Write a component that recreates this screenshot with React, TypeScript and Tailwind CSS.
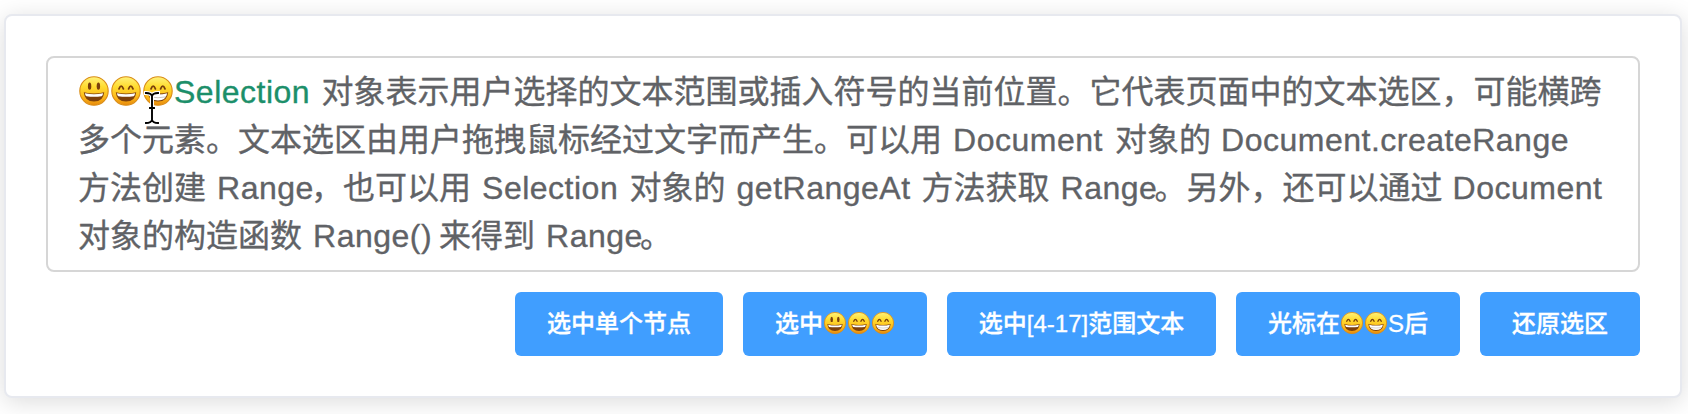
import React from "react";

type Mood = "open" | "smile" | "grin";

function Emoji({ mood, className }: { mood: Mood; className: string }) {
  return (
    <svg viewBox="0 0 32 32" className={className} role="img">
      <defs>
        <linearGradient id={"face-" + mood} x1="0" y1="0" x2="0" y2="1">
          <stop offset="0" stopColor="#fff27a" />
          <stop offset="0.35" stopColor="#ffdc30" />
          <stop offset="0.7" stopColor="#fdbb1a" />
          <stop offset="1" stopColor="#e88a0c" />
        </linearGradient>
      </defs>
      <circle cx="16" cy="16" r="14.2" fill={"url(#face-" + mood + ")"} stroke="#d98c17" strokeWidth="1.1" />
      {mood === "open" ? (
        <g fill="#7a3f0c">
          <ellipse cx="11.6" cy="11.2" rx="1.7" ry="3.6" />
          <ellipse cx="20.4" cy="11.2" rx="1.7" ry="3.6" />
        </g>
      ) : (
        <g fill="none" stroke="#7a3f0c" strokeWidth="1.8" strokeLinecap="round" strokeLinejoin="round">
          <path d="M9 13.8Q11.2 8.6 13.4 13.8" />
          <path d="M18.6 13.8Q20.8 8.6 23 13.8" />
        </g>
      )}
      <path d="M5.8 17.2Q16 19.8 26.2 17.2Q25.4 26.6 16 26.6Q6.6 26.6 5.8 17.2Z" fill="#7d400c" />
      {mood === "grin" ? (
        <>
          <path d="M6.8 18.2Q16 20.6 25.2 18.2Q24 25.4 16 25.4Q8 25.4 6.8 18.2Z" fill="#ffffff" />
          <path d="M8 21.9Q16 23.6 24 21.9" fill="none" stroke="#b9b0a6" strokeWidth="0.7" />
        </>
      ) : (
        <path d="M6.9 18.2Q16 20.5 25.1 18.2Q24.8 20.6 23.6 21.2Q16 22.4 8.4 21.2Q7.2 20.6 6.9 18.2Z" fill="#ffffff" />
      )}
    </svg>
  );
}

const TextEmoji = ({ mood }: { mood: Mood }) => (
  <Emoji mood={mood} className="mb-0.5 h-8 w-8 shrink-0" />
);
const ButtonEmoji = ({ mood }: { mood: Mood }) => (
  <Emoji mood={mood} className="mb-0.5 h-6 w-6 shrink-0" />
);

function Latin({ width, children }: { width: string; children: React.ReactNode }) {
  return <span className={"mb-px shrink-0 tracking-[0.5px] " + width}>{children}</span>;
}

function Line({ children }: { children: React.ReactNode }) {
  return <div className="flex h-12 items-center whitespace-pre">{children}</div>;
}

function Button({ width, children }: { width: string; children: React.ReactNode }) {
  return (
    <button
      className={
        "flex h-16 items-center justify-center rounded-md bg-[#409eff] text-2xl font-medium whitespace-pre text-white [-webkit-text-stroke:0.3px] " +
        width
      }
    >
      {children}
    </button>
  );
}

function TextCursor() {
  return (
    <svg viewBox="0 0 18 36" className="absolute top-[32px] left-[95px] h-9 w-[18px]" fill="none" strokeLinecap="square">
      <path
        d="M3 3Q8 3 9 6Q10 3 15 3M9 6V30M3 33Q8 33 9 30Q10 33 15 33M7 18H11"
        stroke="#ffffff"
        strokeWidth="4"
      />
      <path
        d="M3 3Q8 3 9 6Q10 3 15 3M9 6V30M3 33Q8 33 9 30Q10 33 15 33M7 18H11"
        stroke="#000000"
        strokeWidth="1.9"
      />
    </svg>
  );
}

export default function App() {
  return (
    <div className="h-[414px] w-[1688px] overflow-hidden bg-white pt-3.5 pl-1 font-['Liberation_Sans','Noto_Sans_CJK_SC',sans-serif]">
      <div className="h-[384px] w-[1678px] rounded-lg border-2 border-[#e7e9ef] bg-white px-10 pt-10 shadow-[0_4px_24px_rgba(0,0,0,0.14)]">
        <div className="relative h-[216px] w-[1594px] rounded-lg border-2 border-[#d6d6d6] px-[30px] py-2.5 text-[32px] text-[#606266] [-webkit-text-stroke:0.35px]">
          <Line>
            <TextEmoji mood="open" />
            <TextEmoji mood="smile" />
            <TextEmoji mood="grin" />
            <span className="mb-px w-[147.5px] shrink-0 tracking-[0.5px] text-[#1c8f6a]">Selection</span>
            对象表示用户选择的文本范围或插入符号的当前位置。它代表页面中的文本选区，可能横跨
          </Line>
          <Line>
            多个元素。文本选区由用户拖拽鼠标经过文字而产生。可以用
            <Latin width="w-[173px] pl-[11px]">Document</Latin>
            对象的
            <Latin width="w-[370px] pl-[10px]">Document.createRange</Latin>
          </Line>
          <Line>
            方法创建
            <Latin width="w-[105px] pl-[11px]">Range</Latin>
            ，也可以用
            <Latin width="w-[158.5px] pl-[11px]">Selection</Latin>
            对象的
            <Latin width="w-[196px] pl-[11px]">getRangeAt</Latin>
            方法获取
            <Latin width="w-[105px] pl-[11px]">Range</Latin>
            。另外，还可以通过
            <Latin width="w-[173px] pl-[10px]">Document</Latin>
          </Line>
          <Line>
            对象的构造函数
            <Latin width="w-[137px] pl-[11px]">Range()</Latin>
            来得到
            <Latin width="w-[105px] pl-[11px]">Range</Latin>
            。
          </Line>
          <TextCursor />
        </div>
        <div className="mt-5 flex w-[1594px] justify-end gap-5">
          <Button width="w-[208px]">选中单个节点</Button>
          <Button width="w-[184px]">
            选中
            <ButtonEmoji mood="open" />
            <ButtonEmoji mood="smile" />
            <ButtonEmoji mood="grin" />
          </Button>
          <Button width="w-[269px]">选中[4-17]范围文本</Button>
          <Button width="w-[224px]">
            光标在
            <ButtonEmoji mood="smile" />
            <ButtonEmoji mood="grin" />
            S后
          </Button>
          <Button width="w-[160px]">还原选区</Button>
        </div>
      </div>
    </div>
  );
}
